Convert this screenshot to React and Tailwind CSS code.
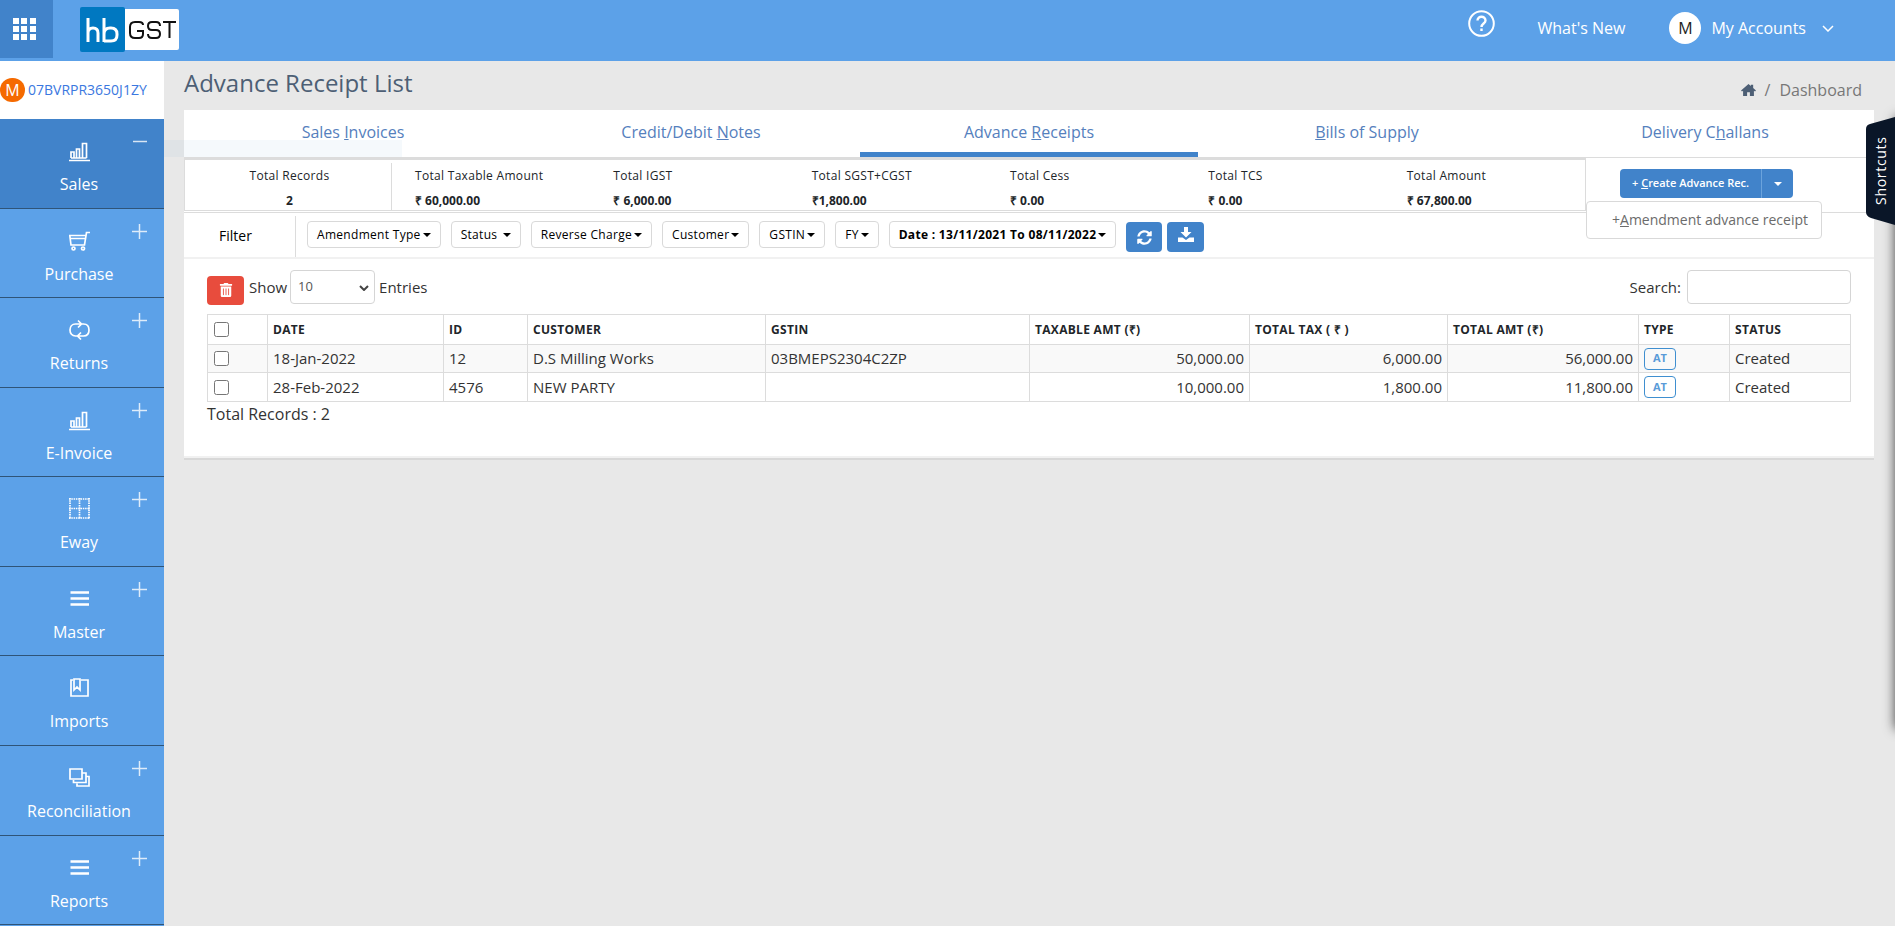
import clsx from 'clsx'
import { FaSyncAlt, FaTrashAlt } from 'react-icons/fa'

const menu = [
  { label: 'Sales', icon: 'chart', sign: 'minus', active: true },
  { label: 'Purchase', icon: 'cart', sign: 'plus' },
  { label: 'Returns', icon: 'loop', sign: 'plus' },
  { label: 'E-Invoice', icon: 'chart', sign: 'plus' },
  { label: 'Eway', icon: 'grid', sign: 'plus' },
  { label: 'Master', icon: 'bars', sign: 'plus' },
  { label: 'Imports', icon: 'bookmark' },
  { label: 'Reconciliation', icon: 'layers', sign: 'plus' },
  { label: 'Reports', icon: 'bars', sign: 'plus' },
]

const tabs = [
  ['Sales ', 'I', 'nvoices'],
  ['Credit/Debit ', 'N', 'otes'],
  ['Advance ', 'R', 'eceipts'],
  ['', 'B', 'ills of Supply'],
  ['Delivery C', 'h', 'allans'],
]

const totals = [
  ['Total Taxable Amount', '₹ 60,000.00'],
  ['Total IGST', '₹ 6,000.00'],
  ['Total SGST+CGST', '₹1,800.00'],
  ['Total Cess', '₹ 0.00'],
  ['Total TCS', '₹ 0.00'],
  ['Total Amount', '₹ 67,800.00'],
]

const filters = ['Amendment Type', 'Status ', 'Reverse Charge', 'Customer', 'GSTIN', 'FY']

const columns = [
  ['DATE', 'w-[176px]'],
  ['ID', 'w-[84px]'],
  ['CUSTOMER', 'w-[238px]'],
  ['GSTIN', 'w-[264px]'],
  ['TAXABLE AMT (₹)', 'w-[220px]'],
  ['TOTAL TAX ( ₹ )', 'w-[198px]'],
  ['TOTAL AMT (₹)', 'w-[191px]'],
  ['TYPE', 'w-[91px]'],
  ['STATUS', ''],
]

const rows = [
  { date: '18-Jan-2022', id: '12', customer: 'D.S Milling Works', gstin: '03BMEPS2304C2ZP', taxable: '50,000.00', tax: '6,000.00', total: '56,000.00' },
  { date: '28-Feb-2022', id: '4576', customer: 'NEW PARTY', gstin: '', taxable: '10,000.00', tax: '1,800.00', total: '11,800.00' },
]

const iconPaths = {
  chart: <path d="M0 20.500h21M2 18v-6h3v6M7.500 18V9h3v9M13.500 18V3.500h4V18M2 18h15.500" />,
  cart: <path d="M21 2.500h-3.500L15.500 15H2L.8 5.500h16M1.200 8.500h15M3 18.500a1.500 1.500 0 1 0 3 0 1.500 1.500 0 1 0-3 0M12.500 18.500a1.500 1.500 0 1 0 3 0 1.500 1.500 0 1 0-3 0" />,
  loop: <path d="M8.500 17H6.500C3 17 1 14.500 1 11s2-6 5.500-6H12M9 1.500 12.500 5 9 8.500M13 5h1.500C18 5 20 7.500 20 11s-2 6-5.500 6H9M12 13.500 8.500 17l3.500 3.500" />,
  grid: <path strokeDasharray="1.500 .8" d="M0 1h21M0 10.500h21M0 20h21M1 0v21M10.500 0v21M20 0v21" />,
  bars: <path strokeWidth="2.500" d="M1.500 4.500H20M1.500 10.500H20M1.500 16.500H20" />,
  bookmark: <path d="M4 3H2v16h17V3h-7M5 2h6v11l-3-3-3 3z" />,
  layers: <path d="M1 2h12v10H1zM13.500 6H17v9.500H4.500V13M17.500 9.500H20V19H8v-2.500" />,
}

function MenuIcon ({ name }) {
  return (
    <svg className="h-[22px] w-[21px]" viewBox="0 0 21 22" fill="none" stroke="currentColor" strokeWidth="1.700">
      {iconPaths[name]}
    </svg>
  )
}

function Caret () {
  return <span className="inline-block border-x-4 border-t-4 border-x-transparent border-t-current align-middle" />
}

function Header () {
  return (
    <header className="flex h-[61px] shrink-0 bg-[#5ca1e8] text-white">
      <button aria-label="Apps" className="grid h-[58px] w-[53px] place-content-center bg-[#4183ca] pr-1">
        <svg className="h-[22px] w-[23px]" viewBox="0 0 23 22" fill="currentColor">
          {[0, 8, 17].map(x => [0, 8, 16].map(y => <rect key={x + '-' + y} x={x} y={y} width="6" height="6" />))}
        </svg>
      </button>
      <a href="#" className="ml-[27px] flex h-[58px] items-center" aria-label="hb GST">
        <svg className="h-[45px] w-[99px]" viewBox="0 0 99 45" fill="none">
          <rect width="45" height="45" rx="2" fill="#0078c1" />
          <path d="M45 2h52q2 0 2 2v37q0 2-2 2H45z" fill="#fff" />
          <path d="M8 11v24M8 26q0-5 5-5t5 5v9M24 11v24M24 27q0-6 6-6h1q6 0 6 6v1q0 6-6 6h-7" stroke="#fff" strokeWidth="3" />
          <path d="M63 18q0-3-4-3h-4q-5 0-5 5v6q0 5 5 5h4q4 0 4-4v-3h-6M80 19q0-4-4-4h-4q-4 0-4 4t4 4h4q4 0 4 4t-4 4h-4q-4 0-4-4M83 15h13M89.500 15v16" stroke="#111" strokeWidth="2" />
        </svg>
      </a>
      <nav className="ml-auto flex h-[56px] items-center pr-[61px] text-base font-medium">
        <a href="#" aria-label="Help" className="mb-[10px]">
          <svg className="h-[27px] w-[27px]" viewBox="0 0 27 27" fill="none" stroke="currentColor" strokeWidth="2">
            <circle cx="13.500" cy="13.500" r="12.300" />
            <path d="M9.500 10.500c0-5 8-5 8 0 0 3-4 3-4 6.500M13.500 18.500v2.500" strokeWidth="2.400" />
          </svg>
        </a>
        <a href="#" className="ml-[43px]">What's New</a>
        <button className="ml-[44px] flex items-center">
          <span className="mr-[10px] grid h-8 w-8 place-content-center rounded-full bg-white font-normal text-[#222]">M</span>
          My Accounts
          <svg className="ml-4 h-[7px] w-3" viewBox="0 0 12 7" fill="none" stroke="currentColor" strokeWidth="1.500">
            <path d="m1 1 5 5 5-5" />
          </svg>
        </button>
      </nav>
    </header>
  )
}

function Sidebar () {
  return (
    <aside className="flex w-[164px] shrink-0 flex-col bg-[#5ca1e8]">
      <a href="#" className="flex h-[58px] items-center gap-[3px] bg-white text-sm text-[#3b78e0]">
        <span className="grid h-6 w-[25px] place-content-center rounded-full bg-[#f56a00] text-base text-white">M</span>
        07BVRPR3650J1ZY
      </a>
      <nav className="flex flex-1 flex-col pb-px">
        {menu.map(m => (
          <a
            key={m.label}
            href="#"
            className={clsx('relative flex flex-1 flex-col items-center border-b border-[#2f5478] pr-[6px] text-base text-white', m.active && 'bg-[#4183ca]')}
          >
            <span className="mt-[21px] mb-[10px]"><MenuIcon name={m.icon} /></span>
            {m.label}
            {m.sign && (
              <svg className="absolute top-[15px] right-[17px] h-[15px] w-[15px] opacity-80" viewBox="0 0 15 15" stroke="currentColor" strokeWidth="1.500">
                <path d={m.sign === 'plus' ? 'M0 7.500h15M7.500 0v15' : 'M1 7.500h14'} />
              </svg>
            )}
          </a>
        ))}
      </nav>
    </aside>
  )
}

function Summary () {
  return (
    <div className="flex h-[55px] border-b border-[#dcdcdc]">
      <div className="mb-px flex min-w-0 flex-1 border border-t-2 border-[#dcdcdc] text-xs text-[#212529]">
        <div className="mt-[3px] flex w-[207px] flex-col items-center border-r border-[#dcdcdc] pt-[3px] pl-[3px]">
          <span className="leading-5 tracking-wide">Total Records</span>
          <b className="mt-[5px] leading-5">2</b>
        </div>
        <div className="mt-[3px] -mr-5 grid flex-1 grid-cols-6 pt-[3px] pl-[23px]">
          {totals.map(([label, value]) => (
            <div key={label} className="flex flex-col">
              <span className="leading-5 tracking-wide">{label}</span>
              <b className="mt-[5px] leading-5">{value}</b>
            </div>
          ))}
        </div>
      </div>
      <div className="relative z-10 w-[288px] pt-[11px] pl-[34px]">
        <div className="flex h-[29px] w-[173px] overflow-hidden rounded-sm bg-[#4183ca] text-[11px] font-semibold text-white">
          <button className="flex-1">+ <u>C</u>reate Advance Rec.</button>
          <button aria-label="More" className="w-8 border-l border-[#6ba3dc]"><Caret /></button>
        </div>
        <a href="#" className="absolute top-[43px] left-0 flex h-[38px] w-[236px] items-center rounded border border-[#d9d9d9] bg-white pb-px pl-[25px] text-sm text-[#6b6b6b]">
          +<u>A</u>mendment advance receipt
        </a>
      </div>
    </div>
  )
}

function Filters () {
  return (
    <div className="flex h-[46px] items-start border-b-2 border-[#f1f1f1] text-xs text-black">
      <div className="mt-[3px] mr-[11px] flex h-[41px] w-[112px] items-center border-r border-[#dcdcdc] pb-px pl-[35px] text-sm font-medium">Filter</div>
      <div className="mt-2 flex gap-[10px]">
        {filters.map(f => (
          <button key={f} className="flex h-[27px] items-center gap-[2px] rounded-sm border border-[#d9d9d9] px-[9px] tracking-wide whitespace-pre">
            {f}<Caret />
          </button>
        ))}
        <button className="flex h-[27px] items-center gap-[2px] rounded-sm border border-[#d9d9d9] px-[9px] font-bold tracking-wide">
          Date : 13/11/2021 To 08/11/2022<Caret />
        </button>
        <div className="flex gap-[5px] pt-px">
          <button aria-label="Refresh" className="grid h-[30px] w-9 place-content-center rounded-sm bg-[#4183ca] text-white"><FaSyncAlt size={15} /></button>
          <button aria-label="Download" className="grid h-[30px] w-[37px] place-content-center rounded-sm bg-[#4183ca] pb-1 text-white">
            <svg className="h-4 w-4" viewBox="0 0 16 16" fill="currentColor">
              <path d="M6 0h4v5h3.500L8 10.500 2.500 5H6zM0 10.500h4.500L8 13l3.500-2.500H16V15H0z" />
            </svg>
          </button>
        </div>
      </div>
    </div>
  )
}

function Receipts () {
  return (
    <div className="border-b-2 border-[#f1f1f1] px-[23px] pt-[10px] pb-[30px] text-[15px] text-[#333]">
      <div className="flex h-9 items-center">
        <button aria-label="Delete" className="mt-[6px] mr-[5px] grid h-[29px] w-[37px] place-content-center rounded-sm bg-[#e84c3d] text-white"><FaTrashAlt size={14} /></button>
        <label htmlFor="entries">Show</label>
        <span className="relative mr-1 ml-[3px]">
          <select id="entries" className="h-[34px] w-[85px] appearance-none rounded-sm border border-[#d5d5d5] bg-white pl-[7px] text-[13px] text-[#555]">
            <option>10</option>
          </select>
          <svg className="pointer-events-none absolute top-[15px] right-[6px] h-[6px] w-[10px]" viewBox="0 0 10 6" fill="none" stroke="#444" strokeWidth="2">
            <path d="m1 1 4 4 4-4" />
          </svg>
        </span>
        Entries
        <label htmlFor="search" className="mr-[6px] ml-auto">Search:</label>
        <input id="search" className="h-[34px] w-[164px] rounded-sm border border-[#d5d5d5] px-2" />
      </div>
      <table className="mt-[9px] w-full table-fixed border-collapse [&_td]:border [&_td]:border-[#dcdcdc] [&_td]:px-[5px] [&_th]:border [&_th]:border-[#dcdcdc] [&_th]:px-[5px]">
        <thead>
          <tr className="h-[30px] text-left text-xs tracking-wide text-[#212529]">
            <th className="w-[60px]"><input type="checkbox" aria-label="Select all" className="ml-px block h-[15px] w-[15px]" /></th>
            {columns.map(([name, width]) => <th key={name} className={width}>{name}</th>)}
          </tr>
        </thead>
        <tbody>
          {rows.map((r, i) => (
            <tr key={r.id} className={clsx(i % 2 === 0 ? 'h-7 bg-[#f9f9f9]' : 'h-[29px]')}>
              <td><input type="checkbox" aria-label={'Select ' + r.id} className="ml-px block h-[15px] w-[15px]" /></td>
              <td>{r.date}</td>
              <td>{r.id}</td>
              <td>{r.customer}</td>
              <td>{r.gstin}</td>
              <td className="text-right">{r.taxable}</td>
              <td className="text-right">{r.tax}</td>
              <td className="text-right">{r.total}</td>
              <td>
                <span className="flex h-[22px] w-8 items-center justify-center rounded border border-[#3f8fd0] text-[11px] font-bold text-[#5a9bd8]">AT</span>
              </td>
              <td>Created</td>
            </tr>
          ))}
        </tbody>
      </table>
      <div className="text-base">Total Records : 2</div>
    </div>
  )
}

export default function App () {
  return (
    <div className="relative flex min-h-screen flex-col overflow-hidden bg-[#e8e8e8] font-['Open_Sans',sans-serif]">
      <Header />
      <div className="flex flex-1">
        <Sidebar />
        <main className="relative min-w-0 flex-1 pr-[21px] pl-5">
          <div className="flex h-[49px] justify-between">
            <h1 className="pt-[6px] text-2xl font-medium text-[#4d5f75]">Advance Receipt List</h1>
            <div className="flex items-center gap-[9px] pt-2 pr-3 text-base text-[#777]">
              <a href="#" aria-label="Home" className="text-[#4d5f75]">
                <svg className="h-[14px] w-[15px]" viewBox="0 0 16 15" fill="currentColor">
                  <path d="M0 8 8 1l2.500 2.200V2H13v3.400L16 8l-1 1-1.200-.6V14H9.500v-4h-3v4H2.200V8.400L1 9z" />
                </svg>
              </a>
              <span>/</span>
              <span>Dashboard</span>
            </div>
          </div>
          <section className="border-b-2 border-[#d8d8d8] bg-white">
            <nav className="grid h-12 grid-cols-5 border-b border-[#dcdcdc]">
              {tabs.map(([before, key, after]) => (
                <a
                  key={key}
                  href="#"
                  className={clsx('border-b-[5px] pt-[10px] text-center text-base text-[#5580bd]', key === 'R' ? 'border-[#4183ca]' : 'border-transparent')}
                >
                  {before}<u>{key}</u>{after}
                </a>
              ))}
            </nav>
            <Summary />
            <Filters />
            <Receipts />
          </section>
          {/* status strip fading out beside the menu */}
          <div className="pointer-events-none absolute top-[79px] left-0 h-[17px] w-[238px] bg-[#4183ca]/5" />
        </main>
      </div>
      {/* shortcuts drawer, closed: only its shadow and handle show */}
      <div className="absolute top-[117px] -right-5 h-[612px] w-5 shadow-[0_0_12px_rgba(0,0,0,0.7)]" />
      <button className="absolute top-[117px] right-0 h-[108px] w-[29px] text-sm font-medium tracking-wider text-white">
        <svg className="absolute inset-0 h-full w-full" viewBox="0 0 29 108" fill="#0a1628">
          <path d="M29 0v108L5 101q-5-2-5-6V12q0-4 4-5z" />
        </svg>
        <span className="absolute inset-0 flex rotate-180 items-center justify-center [writing-mode:vertical-rl]">Shortcuts</span>
      </button>
    </div>
  )
}
